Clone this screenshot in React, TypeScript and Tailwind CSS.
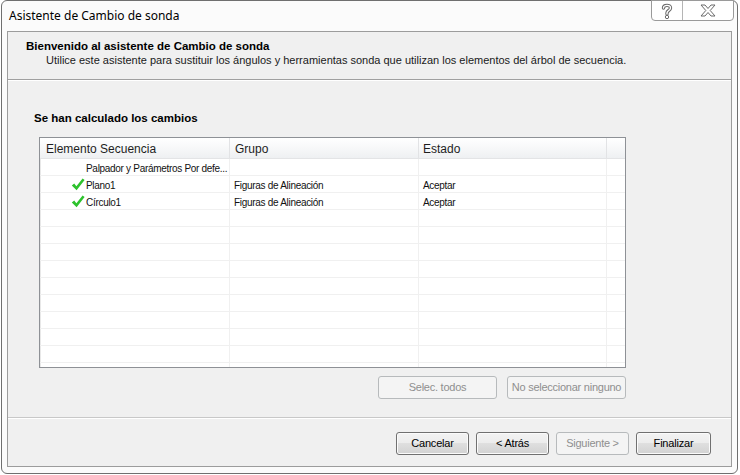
import React from "react";

const tah = { fontFamily: '"Liberation Sans", Arial, sans-serif' } as React.CSSProperties;
const seg = { fontFamily: '"Noto Sans", "Liberation Sans", sans-serif' } as React.CSSProperties;

function Check() {
  return (
    <svg width="14" height="13" viewBox="0 0 14 13" className="shrink-0">
      <path d="M0.8 7.4 L3.2 5.6 L5.4 8.2 L11.6 0.6 L13.6 2 L5.6 12.2 Z" fill="#2dc22d" />
    </svg>
  );
}

function Btn({ children, disabled, w }: { children: React.ReactNode; disabled?: boolean; w: string }) {
  return disabled ? (
    <div className={`${w} h-[23px] flex items-center justify-center whitespace-nowrap rounded-[3px] border border-[#b7babc] bg-[#f4f4f4] text-[11px] tracking-[-0.25px] text-[#8f8f8f]`} style={tah}>
      {children}
    </div>
  ) : (
    <div className={`${w} h-[23px] flex items-center justify-center whitespace-nowrap rounded-[3px] border border-[#707070] bg-[linear-gradient(#f3f3f3,#ececec_50%,#dfdfdf_50%,#d2d2d2)] text-[11px] tracking-[-0.2px] text-black shadow-[inset_0_0_0_1px_#fbfbfb]`} style={tah}>
      {children}
    </div>
  );
}

const rows = [
  { a: "Palpador y Parámetros Por defe...", b: "", c: "", check: false },
  { a: "Plano1", b: "Figuras de Alineación", c: "Aceptar", check: true },
  { a: "Círculo1", b: "Figuras de Alineación", c: "Aceptar", check: true },
];

export default function App() {
  const all = [...rows, ...Array.from({ length: 10 }, () => ({ a: "", b: "", c: "", check: false }))];
  return (
    <div className="w-[740px] h-[475px] bg-white relative overflow-hidden">
      {/* green glow */}
      <div className="absolute left-[592px] top-[21px] w-[60px] h-[9px] rounded-full bg-[#4be06a] blur-[3px] opacity-80" />
      <div className="ml-[1px] w-[737px] h-[474px] border border-[#6f6f6f] rounded-[6px] bg-[#fbfbfb] flex flex-col px-[5px] pb-[6px] relative">
        {/* caption buttons */}
        <div className="absolute right-[3px] top-[-1px] w-[83px] h-[21px] flex border border-[#9a9a9a] rounded-b-[4px] bg-white">
          <div className="w-[31px] h-full flex items-center justify-center border-r border-[#b5b5b5]">
            <svg width="12" height="16" viewBox="0 0 12 16">
              <path d="M2.5 5 C2.5 1.5 9.5 1.5 9.5 5 C9.5 7.5 6 7.5 6 10 L6 11" fill="none" stroke="#6a6a6a" strokeWidth="3.4" strokeLinecap="round" />
              <path d="M2.5 5 C2.5 1.5 9.5 1.5 9.5 5 C9.5 7.5 6 7.5 6 10 L6 11" fill="none" stroke="#ffffff" strokeWidth="1.4" strokeLinecap="round" />
              <circle cx="6" cy="14" r="1.7" fill="#ffffff" stroke="#6a6a6a" strokeWidth="1" />
            </svg>
          </div>
          <div className="flex-1 h-full flex items-center justify-center">
            <svg width="16" height="13" viewBox="0 0 16 13">
              <path d="M1 1 L5 1 L8 4.5 L11 1 L15 1 L10.2 6.5 L15 12 L11 12 L8 8.5 L5 12 L1 12 L5.8 6.5 Z" fill="#ffffff" stroke="#6a6a6a" strokeWidth="1" strokeLinejoin="round" />
            </svg>
          </div>
        </div>
        {/* title */}
        <div className="h-[30px] flex items-center pl-[2px] text-[12px] text-black whitespace-nowrap" style={seg}>
          Asistente de Cambio de sonda
        </div>
        {/* content */}
        <div className="flex-1 flex flex-col border border-[#9c9c9c] bg-[#f0f0f0]">
          {/* header */}
          <div className="h-[48px] shrink-0 flex flex-col pl-[18px] pt-[7px] border-b border-[#a0a0a0] whitespace-nowrap" style={tah}>
            <div className="text-[11.5px] font-bold text-black leading-[14px]">Bienvenido al asistente de Cambio de sonda</div>
            <div className="text-[11px] text-[#1a1a1a] leading-[14px] pl-[20px]">
              Utilice este asistente para sustituir los ángulos y herramientas sonda que utilizan los elementos del árbol de secuencia.
            </div>
          </div>
          {/* body */}
          <div className="flex-1 flex flex-col border-t border-white pl-[26px] pt-[30px]">
            <div className="text-[11.5px] font-bold text-black leading-[14px] whitespace-nowrap" style={tah}>Se han calculado los cambios</div>
            <div className="ml-[5px] mt-[12px] w-[587px] h-[231px] shrink-0 border border-[#8e9196] bg-white flex flex-col overflow-hidden shadow-[inset_1px_1px_0_#e8e8e8]">
              <div className="h-[21px] shrink-0 flex border-b border-[#e3e4e6] bg-[linear-gradient(#ffffff,#f7f8f9_50%,#eef0f2)] text-[12px] text-[#1e1e1e] whitespace-nowrap" style={tah}>
                <div className="w-[190px] border-r border-[#e2e3e5] pl-[6px] pt-[1px] flex items-center">Elemento Secuencia</div>
                <div className="w-[189px] border-r border-[#e2e3e5] pl-[5px] pt-[1px] flex items-center">Grupo</div>
                <div className="w-[188px] border-r border-[#e2e3e5] pl-[4px] pt-[1px] flex items-center">Estado</div>
                <div className="flex-1" />
              </div>
              {all.map((r, i) => (
                <div key={i} className="h-[17px] shrink-0 flex border-b border-[#f0f0f0] text-[10px] tracking-[-0.3px] text-[#111] whitespace-nowrap" style={tah}>
                  <div className="w-[190px] border-r border-[#f0f0f0] flex items-center pt-[3px]">
                    {r.a && (
                      <div className="flex items-center pl-[31px] gap-[1px]">
                        <div className="w-[14px] flex justify-center -mt-[2px]">{r.check && <Check />}</div>
                        <span>{r.a}</span>
                      </div>
                    )}
                  </div>
                  <div className="w-[189px] border-r border-[#f0f0f0] pl-[4px] pt-[3px] flex items-center">{r.b}</div>
                  <div className="w-[188px] border-r border-[#f0f0f0] pl-[4px] pt-[3px] flex items-center">{r.c}</div>
                  <div className="flex-1" />
                </div>
              ))}
            </div>
            <div className="w-[592px] flex justify-end gap-[10px] mt-[8px]">
              <Btn w="w-[119px]" disabled>Selec. todos</Btn>
              <Btn w="w-[119px]" disabled>No seleccionar ninguno</Btn>
            </div>
          </div>
          {/* footer */}
          <div className="h-[49px] shrink-0 border-t border-[#c8c8c8] shadow-[inset_0_1px_0_#ffffff] flex justify-end items-start pt-[14px] pr-[20px] gap-[7px]">
            <Btn w="w-[73px]">Cancelar</Btn>
            <Btn w="w-[73px]">&lt; Atrás</Btn>
            <Btn w="w-[73px]" disabled>Siguiente &gt;</Btn>
            <Btn w="w-[75px]">Finalizar</Btn>
          </div>
        </div>
      </div>
    </div>
  );
}
